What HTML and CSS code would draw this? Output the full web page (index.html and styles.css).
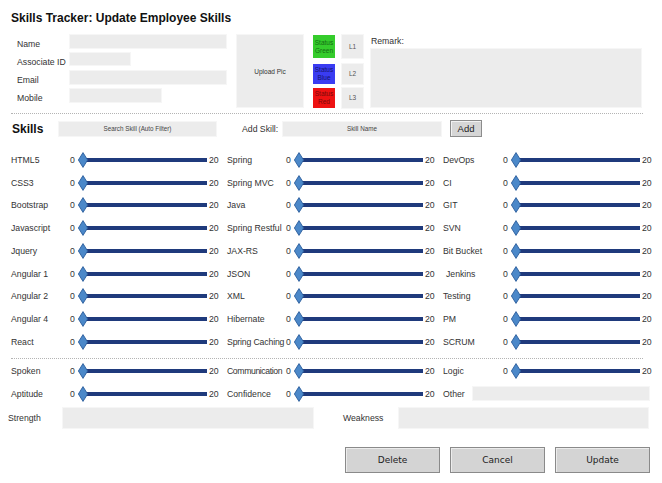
FILE: index.html
```html
<!DOCTYPE html>
<html>
<head>
<meta charset="utf-8">
<title>Skills Tracker</title>
<link rel="stylesheet" href="styles.css">
</head>
<body>
<svg class="defs" width="0" height="0" aria-hidden="true">
  <symbol id="sl" viewBox="0 0 130 16">
    <rect x="5" y="6" width="124" height="4" fill="#1f3a7c"/>
    <polygon points="5,0.6 9.6,8 5,15.4 0.4,8" fill="#4b88c9" stroke="#2c5d9c" stroke-width="0.9"/>
  </symbol>
</svg>
<div class="page">
  <h1 class="title">Skills Tracker: Update Employee Skills</h1>

  <section class="top">
    <div class="form">
      <span class="lbl">Name</span><span class="box w156"></span>
      <span class="lbl">Associate ID</span><span class="box w60"></span>
      <span class="lbl">Email</span><span class="box w156"></span>
      <span class="lbl">Mobile</span><span class="box w91"></span>
    </div>
    <div class="upload">Upload Pic</div>
    <div class="status">
      <div class="st green">Status<br>Green</div>
      <div class="st blue">Status<br>Blue</div>
      <div class="st red">Status<br>Red</div>
    </div>
    <div class="levels">
      <div class="lv big">L1</div>
      <div class="lv">L2</div>
      <div class="lv">L3</div>
    </div>
    <div class="remark">
      <div class="rlbl">Remark:</div>
      <div class="rbox"></div>
    </div>
  </section>

  <div class="sep"></div>

  <div class="skillbar">
    <span class="skills">Skills</span>
    <span class="fbox search">Search Skill (Auto Filter)</span>
    <span class="addlbl">Add Skill:</span>
    <span class="fbox skname">Skill Name</span>
    <span class="addbtn">Add</span>
  </div>

  <div class="grid main">
    <div class="cell"><span class="name">HTML5</span><span class="z">0</span><svg class="sl"><use href="#sl"/></svg><span class="mx">20</span></div>
    <div class="cell"><span class="name">Spring</span><span class="z">0</span><svg class="sl"><use href="#sl"/></svg><span class="mx">20</span></div>
    <div class="cell c3"><span class="name">DevOps</span><span class="z">0</span><svg class="sl"><use href="#sl"/></svg><span class="mx">20</span></div>

    <div class="cell"><span class="name">CSS3</span><span class="z">0</span><svg class="sl"><use href="#sl"/></svg><span class="mx">20</span></div>
    <div class="cell"><span class="name">Spring MVC</span><span class="z">0</span><svg class="sl"><use href="#sl"/></svg><span class="mx">20</span></div>
    <div class="cell c3"><span class="name">CI</span><span class="z">0</span><svg class="sl"><use href="#sl"/></svg><span class="mx">20</span></div>

    <div class="cell"><span class="name">Bootstrap</span><span class="z">0</span><svg class="sl"><use href="#sl"/></svg><span class="mx">20</span></div>
    <div class="cell"><span class="name">Java</span><span class="z">0</span><svg class="sl"><use href="#sl"/></svg><span class="mx">20</span></div>
    <div class="cell c3"><span class="name">GIT</span><span class="z">0</span><svg class="sl"><use href="#sl"/></svg><span class="mx">20</span></div>

    <div class="cell"><span class="name">Javascript</span><span class="z">0</span><svg class="sl"><use href="#sl"/></svg><span class="mx">20</span></div>
    <div class="cell"><span class="name">Spring Restful</span><span class="z">0</span><svg class="sl"><use href="#sl"/></svg><span class="mx">20</span></div>
    <div class="cell c3"><span class="name">SVN</span><span class="z">0</span><svg class="sl"><use href="#sl"/></svg><span class="mx">20</span></div>

    <div class="cell"><span class="name">Jquery</span><span class="z">0</span><svg class="sl"><use href="#sl"/></svg><span class="mx">20</span></div>
    <div class="cell"><span class="name">JAX-RS</span><span class="z">0</span><svg class="sl"><use href="#sl"/></svg><span class="mx">20</span></div>
    <div class="cell c3"><span class="name">Bit Bucket</span><span class="z">0</span><svg class="sl"><use href="#sl"/></svg><span class="mx">20</span></div>

    <div class="cell"><span class="name">Angular 1</span><span class="z">0</span><svg class="sl"><use href="#sl"/></svg><span class="mx">20</span></div>
    <div class="cell"><span class="name">JSON</span><span class="z">0</span><svg class="sl"><use href="#sl"/></svg><span class="mx">20</span></div>
    <div class="cell c3"><span class="name ind">Jenkins</span><span class="z">0</span><svg class="sl"><use href="#sl"/></svg><span class="mx">20</span></div>

    <div class="cell"><span class="name">Angular 2</span><span class="z">0</span><svg class="sl"><use href="#sl"/></svg><span class="mx">20</span></div>
    <div class="cell"><span class="name">XML</span><span class="z">0</span><svg class="sl"><use href="#sl"/></svg><span class="mx">20</span></div>
    <div class="cell c3"><span class="name">Testing</span><span class="z">0</span><svg class="sl"><use href="#sl"/></svg><span class="mx">20</span></div>

    <div class="cell"><span class="name">Angular 4</span><span class="z">0</span><svg class="sl"><use href="#sl"/></svg><span class="mx">20</span></div>
    <div class="cell"><span class="name">Hibernate</span><span class="z">0</span><svg class="sl"><use href="#sl"/></svg><span class="mx">20</span></div>
    <div class="cell c3"><span class="name">PM</span><span class="z">0</span><svg class="sl"><use href="#sl"/></svg><span class="mx">20</span></div>

    <div class="cell"><span class="name">React</span><span class="z">0</span><svg class="sl"><use href="#sl"/></svg><span class="mx">20</span></div>
    <div class="cell"><span class="name tight">Spring Caching</span><span class="z">0</span><svg class="sl"><use href="#sl"/></svg><span class="mx">20</span></div>
    <div class="cell c3"><span class="name">SCRUM</span><span class="z">0</span><svg class="sl"><use href="#sl"/></svg><span class="mx">20</span></div>
  </div>

  <div class="sep sep2"></div>

  <div class="grid soft">
    <div class="cell"><span class="name">Spoken</span><span class="z">0</span><svg class="sl"><use href="#sl"/></svg><span class="mx">20</span></div>
    <div class="cell"><span class="name tighter">Communication</span><span class="z">0</span><svg class="sl"><use href="#sl"/></svg><span class="mx">20</span></div>
    <div class="cell c3"><span class="name">Logic</span><span class="z">0</span><svg class="sl"><use href="#sl"/></svg><span class="mx">20</span></div>

    <div class="cell"><span class="name">Aptitude</span><span class="z">0</span><svg class="sl"><use href="#sl"/></svg><span class="mx">20</span></div>
    <div class="cell"><span class="name">Confidence</span><span class="z">0</span><svg class="sl"><use href="#sl"/></svg><span class="mx">20</span></div>
    <div class="cell c3"><span class="name other">Other</span><span class="box obox"></span></div>
  </div>

  <div class="sw">
    <span class="swlbl">Strength</span><span class="box swbox sbox"></span>
    <span class="swlbl wk">Weakness</span><span class="box swbox wbox"></span>
  </div>

  <div class="actions">
    <button class="btn">Delete</button>
    <button class="btn">Cancel</button>
    <button class="btn">Update</button>
  </div>
</div>
</body>
</html>
```

FILE: styles.css
```css
* { box-sizing: border-box; }
html, body { margin: 0; padding: 0; background: #fff; }
body {
  width: 662px;
  height: 483px;
  overflow: hidden;
  font-family: "Liberation Sans", Arial, sans-serif;
  font-size: 8.7px;
  color: #333;
}
.defs { position: absolute; width: 0; height: 0; }

.title {
  margin: 0;
  padding: 11px 0 0 11px;
  font-size: 12px;
  line-height: 14px;
  font-weight: bold;
  color: #111;
}

/* top section */
.top {
  display: flex;
  margin-top: 10px;
  padding-left: 17px;
  height: 73px;
}
.form {
  display: grid;
  grid-template-columns: 53px 156px;
  grid-template-rows: repeat(4, 13px);
  row-gap: 5px;
}
.lbl { line-height: 18px; font-size: 8.7px; color: #333; white-space: nowrap; }
.box {
  display: block;
  flex-shrink: 0;
  background: #ececec;
  box-shadow: 0 0 0 1px #f6f6f6;
  height: 13px;
}
.w156 { width: 156px; }
.w60 { width: 60px; height: 12px; }
.w91 { width: 91px; }

.upload {
  margin-left: 11px;
  width: 66px;
  height: 72px;
  background: #ececec;
  box-shadow: 0 0 0 1px #f6f6f6;
  display: flex;
  align-items: center;
  justify-content: center;
  font-size: 6.5px;
  color: #333;
}
.status, .levels {
  display: flex;
  flex-direction: column;
}
.status { margin-left: 10px; width: 22px; }
.levels { margin-left: 7px; width: 21px; }
.st, .lv {
  height: 20px;
  display: flex;
  align-items: center;
  justify-content: center;
  text-align: center;
  font-size: 6.5px;
  line-height: 8px;
}
.st:first-child, .lv:first-child { height: 23px; margin-bottom: 6px; }
.st:nth-child(2), .lv:nth-child(2) { margin-bottom: 4px; }
.green { background: #35cc2c; color: #146c14; }
.blue { background: #3a3cf2; color: #141470; }
.red { background: #ee1212; color: #7a0a0a; }
.lv { background: #ececec; color: #555; font-size: 6.5px; box-shadow: 0 0 0 1px #f6f6f6; }

.remark { margin-left: 8px; width: 270px; }
.rlbl { font-size: 8.7px; line-height: 12px; color: #333; }
.rbox {
  margin-top: 2px;
  height: 58px;
  background: #ececec;
  box-shadow: 0 0 0 1px #f6f6f6;
}

.sep {
  margin: 5px 0 0 11px;
  width: 632px;
  height: 0;
  border-top: 1px dotted #b4b4b4;
}

/* skills bar */
.skillbar {
  display: flex;
  align-items: center;
  margin-top: 6px;
  padding-left: 11px;
  height: 17px;
}
.skills { width: 48px; font-size: 12px; font-weight: bold; color: #111; padding-left: 1px; }
.fbox {
  height: 14px;
  background: #ececec;
  box-shadow: 0 0 0 1px #f6f6f6;
  display: flex;
  align-items: center;
  justify-content: center;
  font-size: 6.3px;
  color: #444;
}
.search { width: 157px; }
.addlbl { margin-left: 26px; width: 41px; font-size: 8.7px; color: #333; }
.skname { width: 158px; }
.addbtn {
  margin-left: 9px;
  width: 32px;
  height: 17px;
  background: #d6d6d6;
  border: 1px solid #8c8c8c;
  box-shadow: inset 1px 1px 0 #f2f2f2;
  display: flex;
  align-items: center;
  justify-content: center;
  font-size: 9.5px;
  color: #222;
}

/* slider grids */
.grid {
  display: grid;
  grid-template-columns: repeat(3, 216px);
  grid-auto-rows: 22.75px;
  align-items: center;
  padding-left: 11px;
}
.main { margin-top: 11.5px; }
.cell { display: flex; align-items: center; white-space: nowrap; }
.cell > * { flex-shrink: 0; }
.name { width: 59px; color: #333; }
.tight { letter-spacing: -0.15px; }
.tighter { letter-spacing: -0.4px; }
.c3 .name { width: 60px; }
.ind { padding-left: 3px; }
.z { width: 8px; color: #333; }
.sl { width: 130px; height: 16px; display: block; }
.mx { margin-left: 1px; color: #333; }

.sep2 { margin-top: 4.5px; }
.soft { margin-top: 1px; }
.c3 .other { width: 30px; }
.obox { width: 176px; height: 13px; }

/* strength / weakness */
.sw {
  display: flex;
  align-items: center;
  margin-top: 3px;
  padding-left: 8px;
  height: 20px;
}
.swlbl { width: 55px; color: #333; }
.swbox { height: 20px; }
.sbox { width: 250px; }
.wk { margin-left: 30px; width: 56px; }
.wbox { width: 249px; }

/* buttons */
.actions {
  display: flex;
  justify-content: flex-end;
  gap: 10px;
  margin-top: 19px;
  padding-right: 12px;
}
.btn {
  width: 95px;
  height: 26px;
  margin: 0;
  padding: 0;
  background: #d4d4d4;
  border: 1px solid #8a8a8a;
  box-shadow: inset 1px 1px 0 #ececec;
  font-family: "DejaVu Sans", "Liberation Sans", sans-serif;
  font-size: 9px;
  color: #222;
}
```
